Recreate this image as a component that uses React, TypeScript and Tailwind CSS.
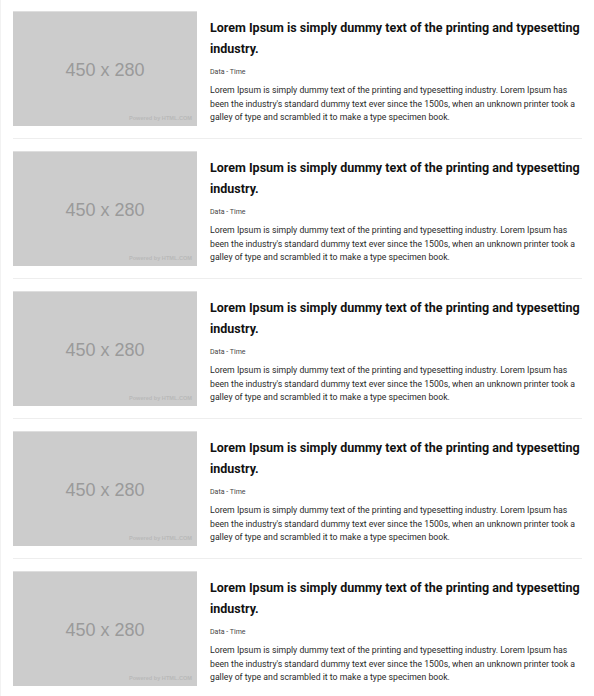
import React from "react";

const BODY =
  "Lorem Ipsum is simply dummy text of the printing and typesetting industry. Lorem Ipsum has been the industry's standard dummy text ever since the 1500s, when an unknown printer took a galley of type and scrambled it to make a type specimen book.";

function Placeholder() {
  return (
    <div className="relative flex h-[115px] w-[184px] shrink-0 items-center justify-center border-t border-[#dedede] bg-[#cccccc]">
      <span className="pt-[2px] font-['Liberation_Sans',Arial,sans-serif] text-[18px] leading-none text-[#9a9a9a]">
        450 x 280
      </span>
      <span className="absolute bottom-[4px] right-[5px] font-['Liberation_Sans',Arial,sans-serif] text-[5.6px] font-bold leading-none text-[#b9b9b9]">
        Powered by HTML.COM
      </span>
    </div>
  );
}

function Post() {
  return (
    <div className="flex gap-[13px] border-b border-[#eeeeee] py-[12px] first:pt-0">
      <Placeholder />
      <div className="min-w-0 flex-1 pt-[6px]">
        <h2 className="text-[12.5px] font-bold leading-[21px] text-[#111]">
          Lorem Ipsum is simply dummy text of the printing and typesetting industry.
        </h2>
        <div className="mt-[8px] text-[7px] leading-[10px] text-[#444]">Data - Time</div>
        <p className="mt-[7px] text-[8.7px] leading-[13.5px] text-[#2a2a2a]">{BODY}</p>
      </div>
    </div>
  );
}

export default function App() {
  return (
    <div className="min-h-[696px] border-l border-[#f2f2f2] bg-white pt-[11px] pl-[12px] pr-[12px] font-['Roboto',sans-serif]">
      {[0, 1, 2, 3, 4].map((i) => (
        <Post key={i} />
      ))}
    </div>
  );
}
